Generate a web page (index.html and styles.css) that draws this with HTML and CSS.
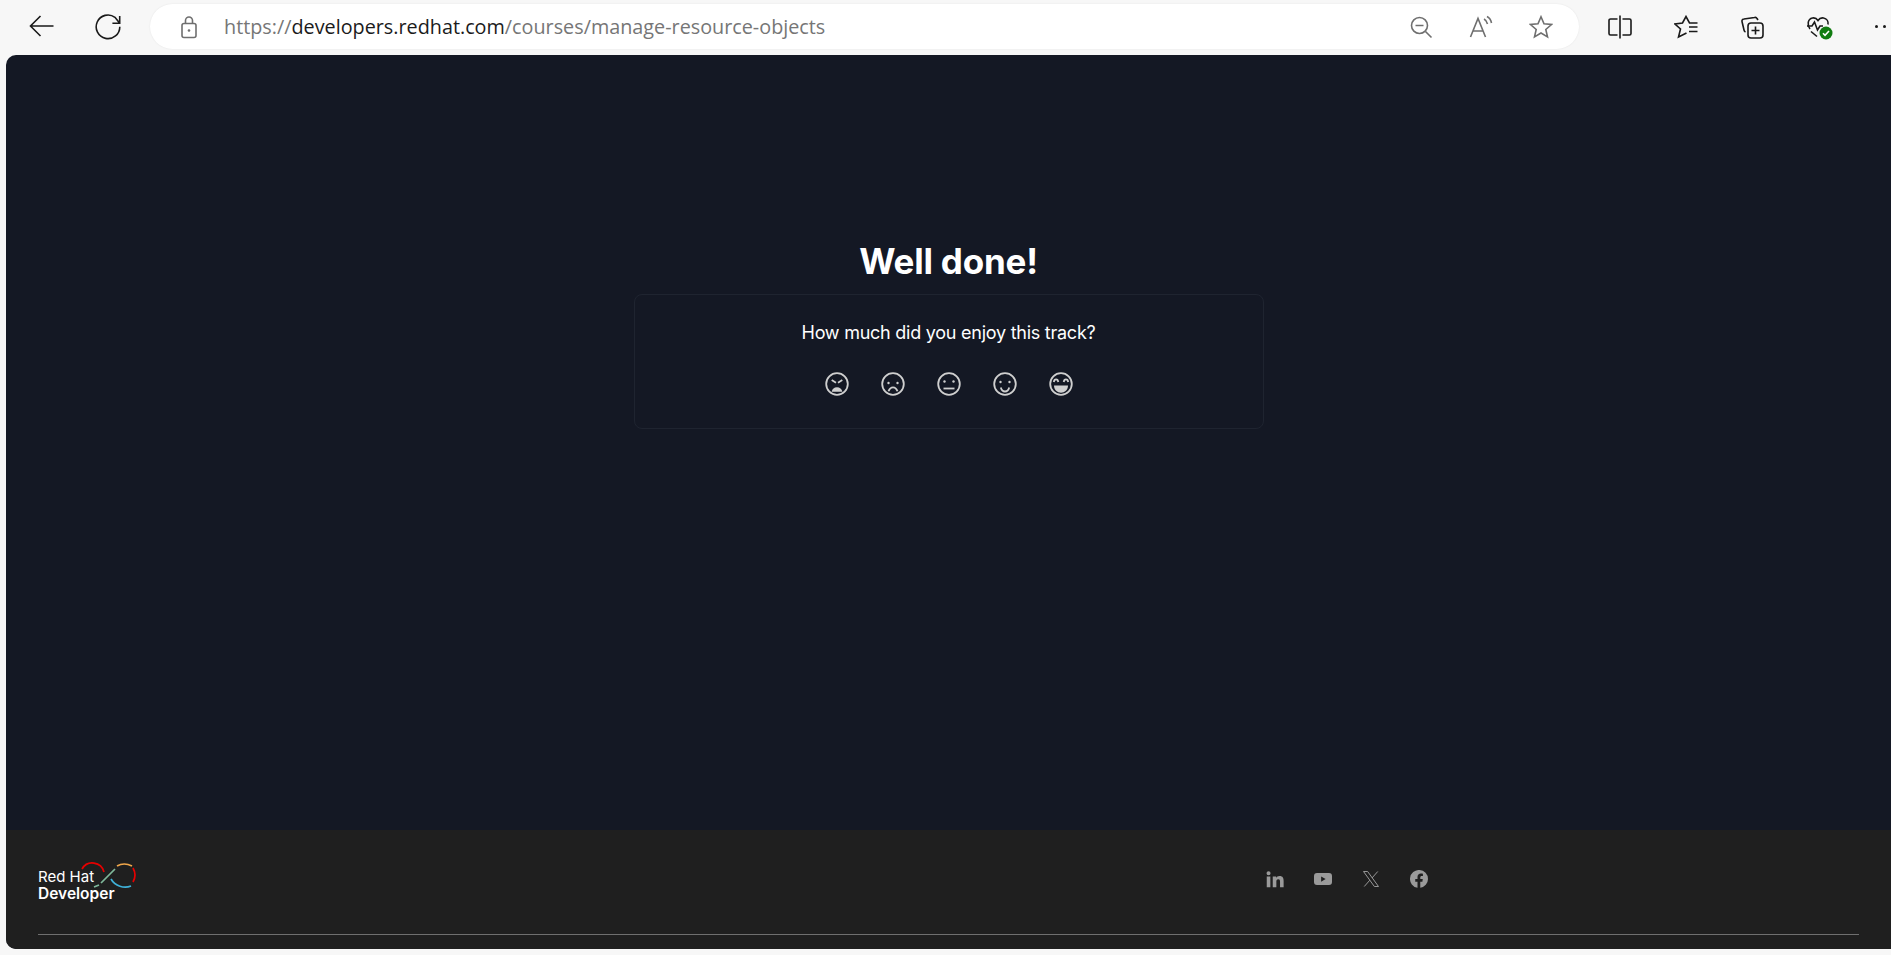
FILE: index.html
```html
<!DOCTYPE html>
<html lang="en">

<head>
    <meta charset="UTF-8">
    <meta name="viewport" content="width=device-width, initial-scale=1.0">
    <title>Manage resource objects</title>
    <link rel="stylesheet" href="styles.css">
</head>

<body>
    <header class="toolbar">
        <button class="tool-btn first">
            <svg class="icon nav-icon" viewBox="0 0 28 28"><path d="M25.500 13H2.500M12.500 3 2.500 13l10 10" /></svg>
        </button>
        <button class="tool-btn">
            <svg class="icon nav-icon" viewBox="0 0 28 28"><path d="M25.800 13.700A11.800 11.800 0 1 1 21 4.300L25.700 10.300M25.700 3v7.300H18.400" /></svg>
        </button>
        <div class="address">
            <svg class="icon lock" viewBox="0 0 24 24">
                <rect x="5" y="8.5" width="14" height="14" rx="2" />
                <path d="M8.500 8.500V5.500a3.500 3.500 0 0 1 7 0v3" />
                <circle class="dot" cx="12" cy="15.500" r="1.300" />
            </svg>
            <div class="url">https://<span class="host">developers.redhat.com</span>/courses/manage-resource-objects</div>
            <div class="address-actions">
                <svg class="icon grey" viewBox="0 0 24 24">
                    <circle cx="10.500" cy="10.500" r="8" />
                    <path d="M6.500 10.500h8M16.500 16.500l6 6" />
                </svg>
                <svg class="icon grey" viewBox="0 0 24 24">
                    <path d="M1.500 22 9 3.500 16.500 22M4 16h10M15 4c2 1 3 3 3.500 5M18 1.500c2.500 1.300 4 3.800 4.500 6.500" />
                </svg>
                <svg class="icon grey" viewBox="0 0 24 24">
                    <path d="M12 1.800l3 7 7.500.7-5.700 5 1.700 7.400-6.500-3.900-6.500 3.900 1.700-7.400-5.700-5 7.500-.7z" />
                </svg>
            </div>
        </div>
        <button class="tool-btn split">
            <svg class="icon" viewBox="0 0 24 24">
                <path d="M9.500 4H2.500A1.500 1.500 0 0 0 1 5.500v13A1.500 1.500 0 0 0 2.500 20h7M14.500 4h7A1.500 1.500 0 0 1 23 5.500v13a1.500 1.500 0 0 1-1.500 1.500h-7M12 .5v23" />
            </svg>
        </button>
        <button class="tool-btn">
            <svg class="icon" viewBox="0 0 24 24">
                <path d="M23.500 8h-8L12 1.500 8.500 8 1 9l5.500 5-2 8 8-4" />
                <path d="M15 12h8.500M15 16.500h8.500" />
            </svg>
        </button>
        <button class="tool-btn">
            <svg class="icon" viewBox="0 0 24 24">
                <rect x="8" y="8" width="15" height="15" rx="3" />
                <path d="M15.500 11.500v8M11.500 15.500h8M18 5l-1-1.500a2 2 0 0 0-2.500-1L4 4a2 2 0 0 0-2 2.500L4 15c.2 1 .8 1.700 1.500 2" />
            </svg>
        </button>
        <button class="tool-btn health">
            <svg class="icon" viewBox="0 0 24 24">
                <path d="M4 14C1 10 1.500 4 6.500 3c2.500-.4 4.500 1 5.500 2.500C13 4 15 2.600 17.500 3c3.500.6 5 3.500 4.500 6.500" />
                <path d="M1 11h5l2.500-4 3 8 2.500-4h3M5 16.500l6 5" />
            </svg>
            <svg class="health-badge" viewBox="0 0 14 14">
                <circle cx="7" cy="7" r="6.500" />
                <path d="M4 7.300l2 2 4-4.300" />
            </svg>
        </button>
        <div class="more"><span></span><span></span><span></span></div>
    </header>

    <div class="page">
        <main class="content">
            <h1 class="title">Well done!</h1>
            <section class="rating">
                <p class="rating-question">How much did you enjoy this track?</p>
                <div class="faces">
                    <svg class="face" viewBox="0 0 24 24">
                        <circle cx="12" cy="12" r="10.800" />
                        <path d="M6.700 8l4.300 2.700M17.300 8 13 10.700" />
                        <path class="fill" d="M6.700 19.800c.5-3 2.500-4.500 5.300-4.500s4.800 1.500 5.300 4.500z" />
                    </svg>
                    <svg class="face" viewBox="0 0 24 24">
                        <circle cx="12" cy="12" r="10.800" />
                        <circle class="fill" cx="7.500" cy="11" r="1.200" />
                        <circle class="fill" cx="16.500" cy="11" r="1.200" />
                        <path d="M7.500 19.300c1-2.700 2.700-4 4.500-4s3.500 1.300 4.500 4" />
                    </svg>
                    <svg class="face" viewBox="0 0 24 24">
                        <circle cx="12" cy="12" r="10.800" />
                        <circle class="fill" cx="7.500" cy="9.500" r="1.200" />
                        <circle class="fill" cx="16.500" cy="9.500" r="1.200" />
                        <path d="M6.500 16.500h11" />
                    </svg>
                    <svg class="face" viewBox="0 0 24 24">
                        <circle cx="12" cy="12" r="10.800" />
                        <circle class="fill" cx="7.500" cy="10" r="1.200" />
                        <circle class="fill" cx="16.500" cy="10" r="1.200" />
                        <path d="M7.800 15.500c.7 2.700 2.400 4 4.200 4s3.500-1.300 4.200-4" />
                    </svg>
                    <svg class="face" viewBox="0 0 24 24">
                        <circle cx="12" cy="12" r="10.800" />
                        <path d="M4.800 10c.5-3.500 4-3.500 4.500 0M14.700 10c.5-3.500 4-3.500 4.500 0" />
                        <path class="fill" d="M5 13.500h14c0 4.500-3.300 7.200-7 7.200s-7-2.700-7-7.200z" />
                    </svg>
                </div>
            </section>
        </main>

        <footer class="footer">
            <div class="footer-top">
                <div class="logo">
                    <svg class="logo-mark" viewBox="0 0 56 28">
                        <path class="red" d="M1 7A12 12 0 0 1 23 10" />
                        <path class="green" d="M34 7 20 21M13 25l5-2" />
                        <path class="blue" d="M30 17C34 24 43 27 50 24" />
                        <path class="orange" d="M36 4Q43 0 51 4" />
                        <path class="red" d="M52 6Q56 13 52 20" />
                    </svg>
                    <div class="logo-red">Red Hat</div>
                    <div class="logo-dev">Developer</div>
                </div>
                <div class="social">
                    <svg class="social-icon" viewBox="0 0 24 24">
                        <path d="M1 8.500h4.800V23H1zM3.400 1.500a2.700 2.700 0 1 1 0 5.400 2.700 2.700 0 0 1 0-5.400zM9 8.500h4.500v2c.8-1.300 2.300-2.400 4.500-2.400 4.600 0 5.500 3 5.500 6.800V23h-4.800v-7.300c0-1.800-.1-3.500-2.300-3.500s-2.600 1.700-2.600 3.400V23H9z" />
                    </svg>
                    <svg class="social-icon" viewBox="0 0 24 24">
                        <path fill-rule="evenodd" d="M4 4h16a4 4 0 0 1 4 4v8a4 4 0 0 1-4 4H4a4 4 0 0 1-4-4V8a4 4 0 0 1 4-4zm5.500 4.500v7l6-3.500z" />
                    </svg>
                    <svg class="social-icon" viewBox="0 0 24 24">
                        <path class="x-stroke" d="M2 2h5.500L22 22h-5.500zM21 2 13.300 10.700M10.500 13.500 3 22" />
                    </svg>
                    <svg class="social-icon" viewBox="0 0 24 24">
                        <path d="M24 12a12 12 0 1 0-14 11.800v-8.300H7V12h3V9.400c0-3 1.800-4.700 4.500-4.700 1.300 0 2.700.2 2.700.2v3h-1.500c-1.500 0-2 .9-2 1.900V12h3.300l-.5 3.500h-2.800v8.300A12 12 0 0 0 24 12z" />
                    </svg>
                </div>
            </div>
            <div class="footer-line"></div>
        </footer>
    </div>
</body>

</html>
```

FILE: styles.css
```css
/* page frame */
html,
body {
    height: 100%;
}

body {
    margin: 0;
    overflow: hidden;
    display: flex;
    flex-direction: column;
    background-color: #f7f7f7;
    font-family: Inter, "Liberation Sans", sans-serif;
}

/* browser toolbar */
.toolbar {
    flex: none;
    height: 55px;
    display: flex;
    align-items: center;
    padding-bottom: 2px;
    box-sizing: border-box;
    white-space: nowrap;
}

.tool-btn {
    flex: none;
    width: 66px;
    height: 40px;
    padding: 0;
    display: flex;
    align-items: center;
    justify-content: center;
    background: none;
    border: none;
}

.tool-btn.first {
    margin-left: 9px;
}

.tool-btn.split {
    margin-left: 8px;
}

.icon {
    width: 24px;
    height: 24px;
    fill: none;
    stroke: #1a1a1a;
    stroke-width: 1.6;
}

.nav-icon {
    width: 28px;
    height: 28px;
}

.icon.grey,
.icon.lock {
    stroke: #6f6f6f;
}

.dot {
    fill: #6f6f6f;
    stroke: none;
}

.address {
    flex: none;
    width: 1429px;
    height: 45px;
    margin-left: 9px;
    padding: 0 26px 0 27px;
    box-sizing: border-box;
    display: flex;
    align-items: center;
    gap: 23px;
    background-color: #fff;
    border-radius: 23px;
    box-shadow: 0 0 2px rgba(0, 0, 0, 0.08);
}

.url {
    flex: 1;
    font-family: "Open Sans", "Noto Sans", sans-serif;
    font-size: 19.8px;
    color: #767676;
}

.host {
    color: #1b1b1b;
}

.address-actions {
    display: flex;
    gap: 36px;
}

.health {
    position: relative;
}

.health-badge {
    position: absolute;
    left: 34px;
    top: 19px;
    width: 14px;
    height: 14px;
    fill: #107c10;
}

.health-badge path {
    fill: none;
    stroke: #fff;
    stroke-width: 1.6;
}

.more {
    display: flex;
    gap: 5px;
    margin-left: 24px;
}

.more span {
    width: 3px;
    height: 3px;
    flex: none;
    border-radius: 50%;
    background-color: #1a1a1a;
}

/* page area */
.page {
    flex: none;
    height: 894px;
    margin-left: 6px;
    display: flex;
    flex-direction: column;
    background-color: #141824;
    border-radius: 10px 0 0 10px;
    overflow: hidden;
}

.content {
    flex: 1;
    padding-top: 183px;
    display: flex;
    flex-direction: column;
    align-items: center;
}

.title {
    margin: 0 0 10px;
    font-size: 35px;
    line-height: 46px;
    font-weight: 700;
    letter-spacing: -0.2px;
    color: #fff;
}

.rating {
    width: 630px;
    height: 135px;
    box-sizing: border-box;
    padding-top: 25px;
    border: 1px solid #1f2430;
    border-radius: 8px;
    display: flex;
    flex-direction: column;
    align-items: center;
}

.rating-question {
    margin: 0 0 26px;
    font-size: 18px;
    line-height: 26px;
    letter-spacing: -0.25px;
    color: #fff;
}

.faces {
    display: flex;
    gap: 32px;
}

.face {
    width: 24px;
    height: 24px;
    fill: none;
    stroke: #cfcfcf;
    stroke-width: 1.8;
}

.face .fill {
    fill: #cfcfcf;
    stroke: none;
}

/* footer */
.footer {
    flex: none;
    height: 119px;
    padding: 32px 32px 0;
    box-sizing: border-box;
    background-color: #1f1f1f;
}

.footer-top {
    height: 72px;
    display: flex;
    align-items: flex-start;
}

.logo {
    position: relative;
    width: 100px;
    color: #fff;
}

.logo-mark {
    position: absolute;
    left: 43px;
    top: 0;
    width: 56px;
    height: 28px;
    fill: none;
    stroke-width: 1.7;
}

.logo-mark .red {
    stroke: #e60000;
}

.logo-mark .green {
    stroke: #7fb89a;
}

.logo-mark .blue {
    stroke: #3fb1d8;
}

.logo-mark .orange {
    stroke: #f0a64a;
}

.logo-red {
    padding-top: 6px;
    font-size: 15px;
    line-height: 17px;
}

.logo-dev {
    font-size: 15.5px;
    line-height: 17px;
    font-weight: 600;
}

.social {
    margin-left: 1128px;
    padding-top: 8px;
    display: flex;
    gap: 30px;
}

.social-icon {
    width: 18px;
    height: 18px;
    fill: #9a9a9a;
}

.social-icon .x-stroke {
    fill: none;
    stroke: #9a9a9a;
    stroke-width: 1.3;
}

.footer-line {
    height: 1px;
    background-color: #6f6f6f;
}
```
